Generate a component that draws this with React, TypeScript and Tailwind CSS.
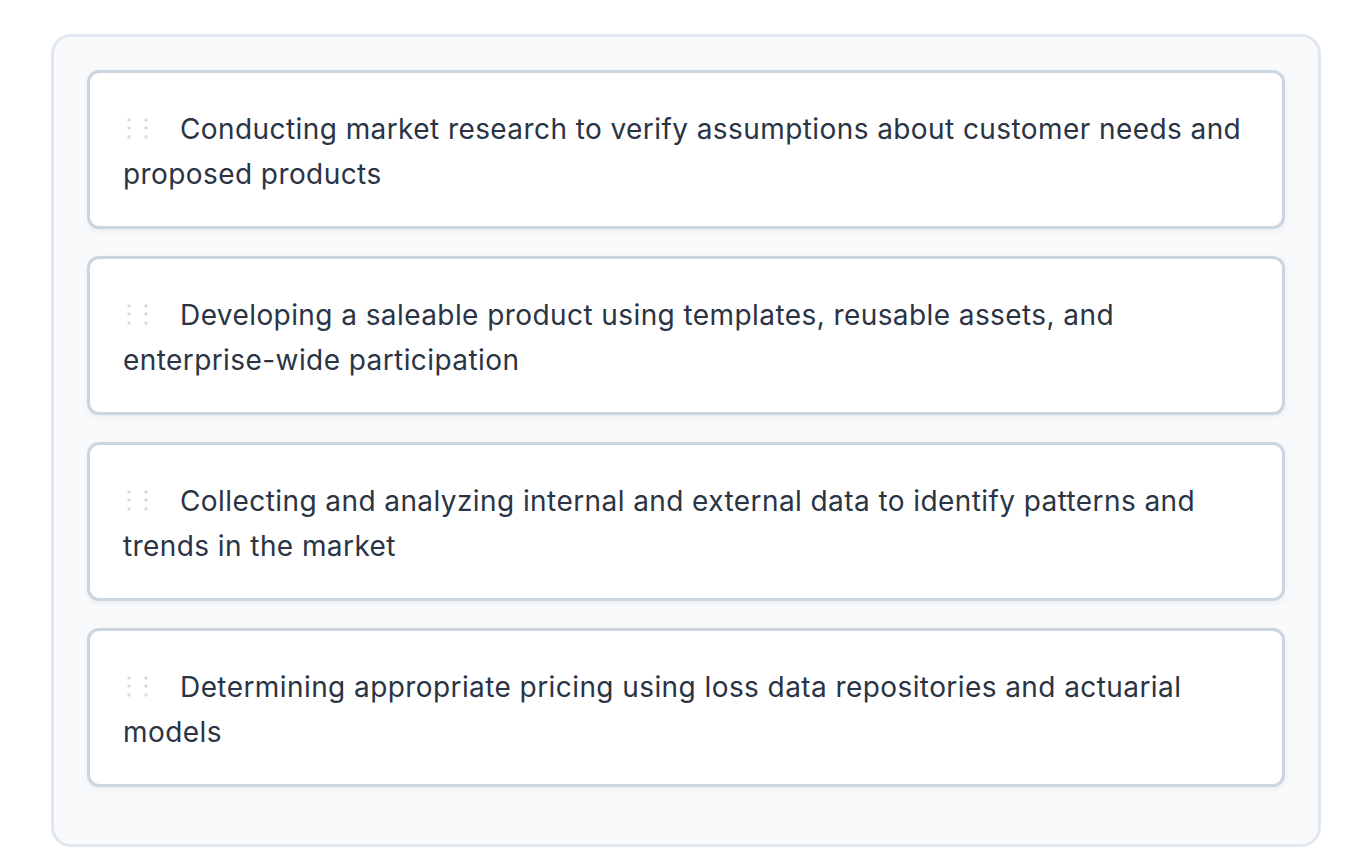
const items = [
  "Conducting market research to verify assumptions about customer needs and proposed products",
  "Developing a saleable product using templates, reusable assets, and enterprise-wide participation",
  "Collecting and analyzing internal and external data to identify patterns and trends in the market",
  "Determining appropriate pricing using loss data repositories and actuarial models",
];

function DragHandle() {
  return (
    <span className="inline-block w-[57px] align-middle">
      <svg width="26" height="24" viewBox="0 0 26 24" className="ml-[3px] -mt-[4px]">
        {[3, 20].map((x) =>
          [3, 11, 20].map((y) => (
            <circle key={`${x}-${y}`} cx={x} cy={y} r="1.7" fill="#d5dbe3" />
          ))
        )}
      </svg>
    </span>
  );
}

export default function App() {
  return (
    <div className="min-h-screen bg-white pl-[51px] pt-[34px] pr-[39px] font-['Inter',sans-serif]">
      <div className="rounded-[20px] border-[3px] border-[#e2e8f0] bg-[#f8fafc] px-[33px] pt-[33px] pb-[57px]">
        <ul className="flex flex-col gap-[27px]">
          {items.map((text) => (
            <li
              key={text}
              className="rounded-[12px] border-[3px] border-[#cbd5e0] bg-white px-[33px] pt-[34px] pb-[29px] shadow-[0_2px_6px_rgba(0,0,0,0.06)]"
            >
              <p className="text-[28px] leading-[45px] tracking-[0.015em] text-[#2a3444]">
                <DragHandle />
                {text}
              </p>
            </li>
          ))}
        </ul>
      </div>
    </div>
  );
}
